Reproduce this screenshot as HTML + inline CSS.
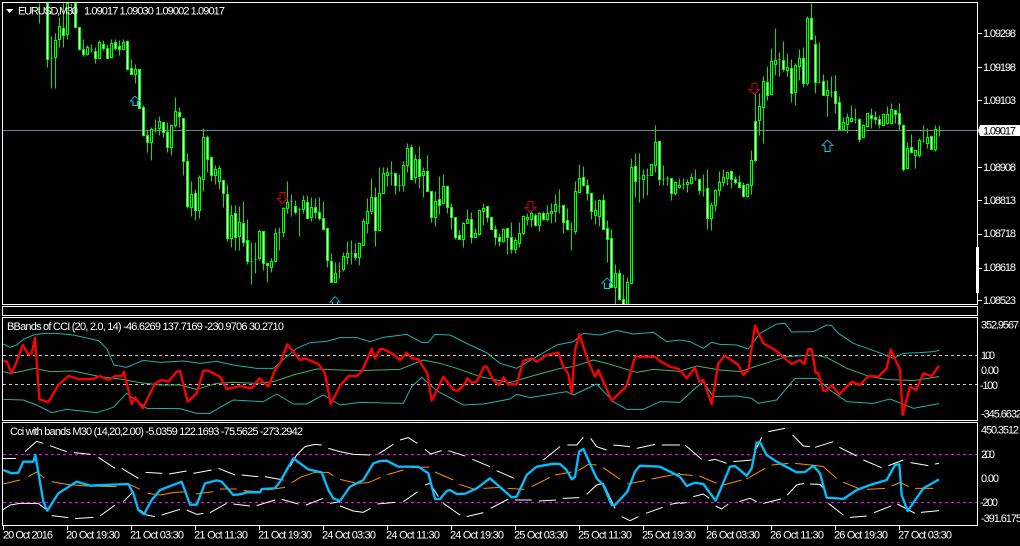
<!DOCTYPE html>
<html><head><meta charset="utf-8"><title>EURUSD,M30</title>
<style>
html,body{margin:0;padding:0;background:#000;width:1020px;height:546px;overflow:hidden}
svg{display:block}
text{font-family:"Liberation Sans",sans-serif;font-size:11px;fill:#fff}
</style></head><body>
<svg xmlns="http://www.w3.org/2000/svg" width="1020" height="546" viewBox="0 0 1020 546">
<defs>
<clipPath id="m"><rect x="3" y="3" width="974" height="301"/></clipPath>
</defs>
<rect width="1020" height="546" fill="#000"/>
<path d="M3 130.5H977" stroke="#708090" fill="none"/>
<g clip-path="url(#m)"><g transform="translate(.5 .5)" shape-rendering="crispEdges">
<path fill="none" stroke="#00e800" d="M39 3V23M47 3V67M51 36V88M55 33V88M59 17V47M63 3V47M67 3V39M71 3V6M75 3V28M79 27V50M83 39V56M87 45V55M91 44V52M95 47V63M99 40V58M103 40V50M107 44V58M111 39V58M115 39V50M119 40V55M123 39V49M127 40V70M131 59V74M135 64V83M139 69V109M143 105V136M147 130V152M151 127V160M155 119V132M159 116V135M163 122V137M167 122V152M171 125V155M175 97V127M179 107V127M183 118V175M187 153V208M191 181V216M195 189V220M199 175V218M203 128V191M207 135V172M211 156V181M215 165V184M219 165V189M223 179V207M227 184V241M231 205V247M235 205V250M239 206V250M243 201V246M247 219V264M251 242V284M255 242V273M259 229V260M263 231V270M267 262V282M271 258V272M275 228V262M279 227V250M283 207V237M287 181V213M291 194V216M295 200V214M299 207V236M303 195V213M307 195V218M311 197V221M315 198V218M319 197V220M323 201V230M327 227V267M331 253V282M335 262V282M339 262V278M343 252V271M347 241V264M351 240V264M355 243V260M359 242V265M363 218V245M367 198V233M371 178V214M375 187V246M379 167V230M383 167V193M387 167V186M391 161V185M395 172V194M399 174V191M403 161V191M407 143V172M411 144V179M415 154V183M419 146V188M423 167V197M427 155V191M431 191V222M435 191V226M439 176V214M443 174V204M447 185V213M451 203V229M455 217V239M459 230V239M463 222V247M467 209V223M471 212V243M475 228V237M479 209V235M483 203V225M487 206V222M491 216V229M495 225V245M499 233V246M503 228V242M507 228V254M511 222V253M515 237V253M519 222V247M523 215V235M527 213V225M531 211V227M535 213V226M539 212V231M543 211V220M547 205V221M551 203V223M555 194V222M559 189V213M563 205V233M567 208V230M571 222V250M575 181V234M579 164V192M583 166V186M587 179V200M591 192V219M595 200V224M599 199V226M603 194V229M607 220V262M611 229V287M615 264V304M619 269V300M623 274V304M627 277V304M631 158V283M635 153V197M639 153V202M643 169V198M647 168V195M651 164V175M655 125V172M659 141V185M663 165V185M667 176V185M671 178V200M675 181V195M679 178V188M683 178V189M687 179V192M691 173V184M695 169V180M699 178V194M703 174V196M707 169V229M711 202V230M715 189V211M719 171V196M723 169V186M727 171V185M731 170V188M735 176V184M739 175V188M743 182V197M747 183V197M751 150V194M755 93V162M759 93V135M763 76V143M767 66V100M771 48V94M775 28V75M779 52V76M783 41V71M787 53V76M791 59V102M795 63V105M799 49V80M803 47V87M807 16V85M811 3V39M815 35V93M819 42V83M823 74V95M827 80V116M831 76V97M835 75V113M839 96V130M843 117V130M847 113V133M851 105V122M855 108V123M859 118V142M863 124V137M867 113V127M871 108V128M875 111V124M879 115V128M883 113V125M887 106V124M891 103V123M895 110V123M899 103V130M903 124V171M907 142V169M911 134V153M915 150V168M919 138V157M923 125V142M927 128V148M931 135V149M935 125V151M939 125V136"/>
<path fill="#000" stroke="#00ff00" d="M54 40H56V57H54ZM58 26H60V39H58ZM66 3H68V34H66ZM86 47H88V54H86ZM98 42H100V58H98ZM110 43H112V57H110ZM122 42H124V49H122ZM134 69H136V74H134ZM150 129H152V142H150ZM158 121H160V128H158ZM170 125H172V147H170ZM174 111H176V125H174ZM190 194H192V207H190ZM198 177H200V210H198ZM202 137H204V179H202ZM214 169H216V175H214ZM218 168H220V181H218ZM230 215H232V238H230ZM238 222H240V236H238ZM258 231H260V258H258ZM270 261H272V267H270ZM274 233H276V261H274ZM282 208H284V232H282ZM286 202H288V208H286ZM302 200H304V209H302ZM310 207H312V217H310ZM334 273H336V282H334ZM342 256H344V269H342ZM346 253H348V257H346ZM358 243H360V257H358ZM362 221H364V245H362ZM366 211H368V223H366ZM370 197H372V211H370ZM378 193H380V230H378ZM382 173H384V193H382ZM386 172H388V175H386ZM402 165H404V185H402ZM406 148H408V165H406ZM414 159H416V177H414ZM422 171H424V175H422ZM434 201H436V217H434ZM442 186H444V203H442ZM462 223H464V239H462ZM466 219H468V223H466ZM474 233H476V237H474ZM478 210H480V234H478ZM482 208H484V211H482ZM502 229H504V241H502ZM514 240H516V249H514ZM518 233H520V243H518ZM522 216H524V233H522ZM526 217H528V219H526ZM530 213H532V219H530ZM538 213H540V225H538ZM546 213H548V219H546ZM550 211H552V213H550ZM554 204H556V211H554ZM574 191H576V231H574ZM578 178H580V192H578ZM594 210H596V215H594ZM598 200H600V216H598ZM614 273H616V287H614ZM626 282H628V304H626ZM630 167H632V283H630ZM642 175H644V179H642ZM650 164H652V175H650ZM654 142H656V165H654ZM674 182H676V193H674ZM678 185H680V187H678ZM686 182H688V184H686ZM690 177H692V183H690ZM710 205H712V218H710ZM714 190H716V205H714ZM718 182H720V190H718ZM722 177H724V182H722ZM726 172H728V178H726ZM746 184H748V196H746ZM750 160H752V185H750ZM758 106H760V120H758ZM762 81H764V107H762ZM770 61H772V94H770ZM774 60H776V64H774ZM786 67H788V70H786ZM794 65H796V92H794ZM798 58H800V66H798ZM806 18H808V83H806ZM826 90H828V95H826ZM842 122H844V129H842ZM846 117H848V124H846ZM850 118H852V121H850ZM862 125H864V137H862ZM866 113H868V126H866ZM882 114H884V125H882ZM886 114H888V123H886ZM890 109H892V123H890ZM906 148H908V168H906ZM914 150H916V155H914ZM918 140H920V155H918ZM926 137H928V143H926ZM934 129H936V149H934Z"/>
<path fill="#fff" stroke="#00ff00" d="M46 3H48V59H46ZM62 28H64V35H62ZM74 3H76V27H74ZM78 27H80V49H78ZM82 49H84V54H82ZM94 51H96V58H94ZM102 44H104V48H102ZM106 48H108V58H106ZM114 42H116V48H114ZM118 46H120V49H118ZM126 41H128V69H126ZM130 68H132V74H130ZM138 69H140V108H138ZM142 107H144V135H142ZM146 135H148V142H146ZM162 122H164V132H162ZM166 132H168V147H166ZM178 112H180V116H178ZM182 118H184V161H182ZM186 161H188V206H186ZM194 193H196V210H194ZM206 137H208V159H206ZM210 157H212V175H210ZM222 180H224V193H222ZM226 194H228V238H226ZM234 213H236V237H234ZM242 223H244V242H242ZM246 240H248V261H246ZM262 231H264V263H262ZM266 263H268V265H266ZM294 206H296V212H294ZM306 202H308V218H306ZM314 207H316V212H314ZM318 212H320V218H318ZM322 218H324V229H322ZM326 228H328V260H326ZM330 261H332V282H330ZM354 253H356V257H354ZM374 197H376V230H374ZM394 173H396V185H394ZM410 147H412V179H410ZM418 159H420V176H418ZM426 171H428V191H426ZM430 191H432V217H430ZM438 199H440V205H438ZM446 186H448V207H446ZM450 207H452V217H450ZM454 217H456V237H454ZM458 235H460V239H458ZM470 219H472V237H470ZM486 206H488V217H486ZM490 217H492V229H490ZM494 229H496V237H494ZM498 237H500V241H498ZM506 228H508V237H506ZM510 237H512V249H510ZM534 215H536V225H534ZM542 213H544V219H542ZM562 205H564V222H562ZM566 220H568V229H566ZM582 177H584V185H582ZM586 185H588V193H586ZM590 193H592V211H590ZM602 200H604V229H602ZM606 228H608V239H606ZM610 238H612V287H610ZM618 273H620V299H618ZM622 299H624V304H622ZM634 166H636V181H634ZM658 141H660V179H658ZM670 178H672V193H670ZM698 179H700V190H698ZM706 188H708V218H706ZM730 171H732V179H730ZM734 179H736V182H734ZM738 182H740V187H738ZM742 185H744V196H742ZM754 121H756V160H754ZM766 82H768V95H766ZM782 60H784V69H782ZM790 68H792V93H790ZM802 58H804V83H802ZM810 18H812V39H810ZM814 44H816V82H814ZM822 81H824V95H822ZM834 91H836V103H834ZM838 102H840V129H838ZM858 119H860V139H858ZM870 115H872V118H870ZM874 117H876V119H874ZM878 119H880V124H878ZM894 110H896V114H894ZM898 113H900V124H898ZM902 125H904V169H902ZM910 147H912V152H910ZM930 136H932V149H930Z"/>
<path fill="none" stroke="#00ff00" d="M50 58H52M90 49H92M154 128H156M250 261H252M254 259H256M278 232H280M290 201H292M298 209H300M338 271H340M350 253H352M390 173H392M398 185H400M558 206H560M570 229H572M638 178H640M646 175H648M662 179H664M666 178H668M682 184H684M694 178H696M702 190H704M778 59H780M818 82H820M830 92H832M854 119H856M922 141H924M938 130H940"/>
<path fill="none" stroke="#00a8c8" d="M134.5 95.5L130 100.5H132.5M137 100.5H139L134.5 95.5M334.5 296L329.5 301.5H332M337 301.5H339.5L334.5 296M606.5 277.5L601.5 282.5H604M609 282.5H611.5L606.5 277.5M827 139.5L821.5 145H824.5M829.5 145H832.5L827 139.5"/>
<path fill="none" stroke="#00d8f8" d="M132.5 100.5V105H137V100.5M332 301.5V306H337V301.5M604 282.5V288H609V282.5M824.5 145V151H829.5V145"/>
<path fill="none" stroke="#d00000" d="M279.5 192H284.5V198H287L282 203L277 198H279.5ZM527.5 201H532.5V207H535.5L530 212L524.5 207H527.5ZM751.5 83H756.5V89H759L754 94L748.5 89H751.5Z"/>
</g></g>
<g shape-rendering="crispEdges" fill="none">
<path stroke="#fff" d="M2.5 2.5H977.5V304.5H2.5ZM2.5 306.5H977.5V315.5H2.5ZM2.5 317.5H977.5V420.5H2.5ZM2.5 422.5H977.5V525.5H2.5Z"/>
<rect x="976" y="247" width="3" height="46" fill="#fff"/>
<path stroke="#c8c8c8" stroke-dasharray="3 3" d="M3 355.5H977M3 384.5H977"/>
<path stroke="#ff00ff" stroke-dasharray="3 3" d="M3 454.5H977M3 502.5H977"/>
<path stroke="#fff" d="M978 33.5H982M978 67.5H982M978 100.5H982M978 167.5H982M978 200.5H982M978 234.5H982M978 268.5H982M978 300.5H982M3.5 526V530M67.5 526V530M131.5 526V530M195.5 526V530M259.5 526V530M323.5 526V530M387.5 526V530M451.5 526V530M515.5 526V530M579.5 526V530M643.5 526V530M707.5 526V530M771.5 526V530M835.5 526V530M899.5 526V530"/>
</g>
<!-- Pane 2 -->
<g fill="none" stroke-linejoin="round">
<g transform="translate(0 300) scale(.33333)">
<path stroke="#20b2aa" stroke-width="3" d="M10 132L30 142 50 135 70 118 100 105 130 100 170 100 220 105 295 122 320 145 342 195 380 202 430 181 480 187 550 183 600 190 650 184 700 195 770 205 820 205 860 170 890 145 930 128 980 124 1020 113"/>
<path stroke="#3cb371" stroke-width="3" d="M10 215L30 220 60 215 105 205 150 215 220 213 300 230 360 237 420 248 480 255 540 255 590 268 650 250 700 247 770 250 820 245 880 225 950 207 1020 210"/>
<path stroke="#20b2aa" stroke-width="3" d="M10 298L70 300 110 315 155 338 200 328 290 338 340 322 380 280 440 325 540 326 590 340 630 340 660 322 700 300 790 305 830 282 880 312 920 312 970 285 1020 315"/>
<path stroke="#ff0000" stroke-width="7" d="M10 182L20 185 35 220 50 185 68 135 85 163 95 160 105 113 118 298 145 306 175 255 205 228 240 238 280 237 300 228 325 240 345 228 365 228 372 215 395 312 405 292 428 325 465 250 485 240 505 245 530 215 540 212 563 305 590 280 610 212 625 212 660 230 680 267 720 258 755 265 778 235 805 260 825 210 840 190 862 133 900 180 915 175 955 192 975 220 992 312 1020 258"/>
</g>
<g transform="translate(340 300) scale(.33333)">
<path stroke="#20b2aa" stroke-width="3" d="M0 113L50 113 90 125 130 112 200 103 245 127 265 127 285 103 330 105 390 135 440 158 480 190 530 205 590 170 650 135 700 125 730 100 780 105 830 91 880 102 940 97 980 125 1020 120"/>
<path stroke="#3cb371" stroke-width="3" d="M0 210L60 212 180 208 250 180 300 190 350 205 420 230 510 248 570 230 660 205 700 200 760 180 800 190 890 217 940 208 1020 214"/>
<path stroke="#20b2aa" stroke-width="3" d="M0 315L60 307 190 310 215 260 245 232 290 272 370 315 430 312 510 297 530 283 570 293 680 275 700 285 770 252 820 305 860 328 910 328 960 305 1020 307"/>
<path stroke="#ff0000" stroke-width="7" d="M0 258L25 228 50 228 65 215 95 147 105 175 120 147 130 147 160 163 180 180 200 158 215 175 235 178 262 220 275 302 310 230 340 270 355 272 375 250 382 235 395 248 410 245 432 200 440 200 460 240 478 255 490 232 505 253 530 253 550 182 575 175 590 185 620 165 655 158 670 200 685 222 695 280 705 150 718 103 745 185 765 230 775 210 815 302 860 258 885 170 945 170 960 183 990 200 1020 208"/>
</g>
<g transform="translate(680 300) scale(.33333)">
<path stroke="#20b2aa" stroke-width="3" d="M0 120L30 125 70 145 95 127 120 133 170 135 205 147 240 100 290 72 315 70 335 96 400 95 440 75 455 77 475 100 520 130 590 155 640 175 670 160 720 158 760 155 777 151"/>
<path stroke="#3cb371" stroke-width="3" d="M0 213L50 198 120 210 180 215 240 195 320 170 400 165 440 172 500 205 570 230 620 238 700 242 777 230"/>
<path stroke="#20b2aa" stroke-width="3" d="M0 307L40 270 70 245 100 290 170 288 215 295 235 310 290 300 345 235 410 235 450 270 500 305 580 310 630 297 700 325 777 311"/>
<path stroke="#ff0000" stroke-width="7" d="M0 210L20 235 45 203 58 245 70 240 95 312 115 190 135 167 175 195 190 225 205 210 225 77 250 130 285 150 335 192 360 180 372 192 385 147 395 147 407 218 415 220 430 272 440 272 455 255 478 283 515 245 540 255 565 228 595 230 620 205 632 148 660 210 668 345 690 260 708 270 730 220 755 228 777 197"/>
</g>
<!-- Pane 3 -->
<g transform="translate(0 300) scale(.33333)">
<path stroke="#ff8c00" stroke-width="3" d="M10 552L60 540M85 530L110 516 133 534M155 545L200 553 260 558 350 560M385 552L420 568M443 580L480 585 520 578 560 575M587 582L640 575M660 567L710 567M730 572L780 575M800 570L855 562M875 548L905 530 945 517 985 517 1000 527"/>
<path stroke="#fff" stroke-width="3" d="M8 476L48 475M75 455L110 424 130 430M150 437L200 455M222 458L272 463M295 472L345 505M365 505L415 535M437 517L487 520M507 522L560 513M580 520L635 510M655 505L705 525M725 525L775 530M795 530L850 540M870 500L890 465 915 440 945 433 965 435M985 445L1020 455"/>
<path stroke="#fff" stroke-width="3" d="M8 630L30 615 60 610 115 610 140 630M155 647L205 653M225 656L280 652M300 648L345 615M370 605L400 575M420 630L440 645 465 650M485 645L540 628M560 630L590 643 610 640M630 638L680 610M700 612L750 618M770 617L825 600M845 598L895 612M918 615L970 595M990 610L1020 605"/>
<path stroke="#00bfff" stroke-width="7" d="M10 510L35 520 55 518 70 485 100 485 106 465 130 605 142 632 175 580 230 545 270 557 310 555 385 552 400 580 415 630 432 643 455 600 480 570 545 545 570 614 590 614 615 550 650 541 665 545 700 585 720 583 740 577 780 577 785 567 825 565 840 545 880 475 900 490 925 508 965 517 985 570 1000 595 1020 603"/>
</g>
<g transform="translate(340 300) scale(.33333)">
<path stroke="#ff8c00" stroke-width="3" d="M0 538L50 550 85 548 122 532M142 524L190 510M215 503L268 501M285 516L340 540M358 553L410 570M430 565L480 562M503 565L553 568M575 560L630 532M645 525L695 516M715 512L745 493 770 495M790 503L840 538M862 552L915 542M935 537L1020 520"/>
<path stroke="#fff" stroke-width="3" d="M0 455L40 463 90 465M115 462L160 433M180 420L205 413 232 430M255 448L272 462 305 452M325 452L375 468M397 478L450 500M470 512L522 535M610 480L660 440M682 435L710 435 730 412M752 415L770 440 800 450M820 435L870 440M890 445L945 433M965 435L1020 435"/>
<path stroke="#fff" stroke-width="3" d="M0 618L40 633 70 637 92 625M112 612L165 607M190 605L233 575M255 555L270 550 295 590M310 610L360 645M380 650L430 638M452 625L505 597M525 600L575 600M597 603L648 600M668 595L718 593M740 583L770 555 790 550 825 625M845 650L870 662 895 650M918 640L968 622M990 613L1020 608"/>
<path stroke="#00bfff" stroke-width="7" d="M0 603L30 560 70 540 100 490 120 483 140 482 175 500 235 500 265 520 285 597 300 597 320 573 330 570 350 582 375 581 410 565 450 535 490 570 515 592 530 590 560 525 590 500 640 491 660 492 680 510 695 538 705 530 717 455 730 447 770 535 790 555 815 615 825 615 862 575 885 515 900 497 960 500 1000 520 1020 530"/>
</g>
<g transform="translate(680 300) scale(.33333)">
<path stroke="#ff8c00" stroke-width="3" d="M0 523L38 526M58 528L110 550M130 555L185 540M200 537L255 505M275 495L325 490M345 490L410 497 430 500 470 535M490 547L540 567M560 568L615 565M635 558L660 547 687 560M705 565L760 565"/>
<path stroke="#fff" stroke-width="3" d="M15 435L65 478M85 482L105 478 140 490M160 485L215 480M225 455L245 412M265 395L315 385M338 405L370 438 390 440M405 442L460 425M478 442L530 468M550 480L605 503M625 497L670 480M692 488L745 497M765 492L777 490"/>
<path stroke="#fff" stroke-width="3" d="M0 610L20 608M40 590L70 582 88 595M107 618L125 627 145 612M178 605L210 595 230 605M250 610L303 597M322 585L350 555 372 550M390 552L420 553 435 570M445 610L490 645M510 652L560 648M582 638L633 618M652 612L705 640M723 637L777 632"/>
<path stroke="#00bfff" stroke-width="7" d="M0 530L20 558 45 548 70 552 107 602 150 500 165 498 200 527 215 505 230 428 240 427 260 465 290 485 350 517 375 516 400 497 420 520 440 593 470 595 490 597 530 570 570 555 620 540 645 495 658 493 665 585 683 633 730 565 777 538"/>
</g>
</g>
<!-- Header -->
<path d="M6 9H13.5L9.75 13Z" fill="#fff"/>
<text x="18" y="14.5" textLength="60" lengthAdjust="spacing">EURUSD,M30</text>
<text x="84" y="14.5" textLength="141" lengthAdjust="spacing">1.09017 1.09030 1.09002 1.09017</text>
<text x="7" y="330" textLength="277" lengthAdjust="spacing">BBands of CCI (20, 2.0, 14) -46.6269 137.7169 -230.9706 30.2710</text>
<text x="10" y="435" textLength="293" lengthAdjust="spacing">Cci with bands M30 (14,20,2.00) -5.0359 122.1693 -75.5625 -273.2942</text>
<!-- Price axis -->
<g>
<text x="983" y="37" textLength="33" lengthAdjust="spacing">1.09298</text>
<text x="983" y="71" textLength="33" lengthAdjust="spacing">1.09198</text>
<text x="983" y="104" textLength="33" lengthAdjust="spacing">1.09103</text>
<text x="983" y="171" textLength="33" lengthAdjust="spacing">1.08908</text>
<text x="983" y="204" textLength="33" lengthAdjust="spacing">1.08813</text>
<text x="983" y="237" textLength="33" lengthAdjust="spacing">1.08718</text>
<text x="983" y="271" textLength="33" lengthAdjust="spacing">1.08618</text>
<text x="983" y="304" textLength="33" lengthAdjust="spacing">1.08523</text>
<path d="M978 130.5L980 125H1020V136H980Z" fill="#fff"/>
<text x="983" y="134.5" textLength="33" lengthAdjust="spacing" style="fill:#000">1.09017</text>
<text x="981" y="328.5" textLength="38" lengthAdjust="spacing">352.9567</text>
<text x="981" y="359" textLength="14" lengthAdjust="spacing">100</text>
<text x="981" y="374" textLength="18" lengthAdjust="spacing">0.00</text>
<text x="980" y="389" textLength="18" lengthAdjust="spacing">-100</text>
<text x="981" y="417.5" textLength="41" lengthAdjust="spacing">-345.6632</text>
<text x="981" y="433.5" textLength="38" lengthAdjust="spacing">450.3512</text>
<text x="981" y="458" textLength="14" lengthAdjust="spacing">200</text>
<text x="981" y="482" textLength="18" lengthAdjust="spacing">0.00</text>
<text x="980" y="506" textLength="18" lengthAdjust="spacing">-200</text>
<text x="981" y="522" textLength="41" lengthAdjust="spacing">-391.6175</text>
</g>
<!-- Time axis -->
<g>
<text x="3" y="538.5" textLength="50" lengthAdjust="spacing">20 Oct 2016</text>
<text x="66" y="538.5" textLength="54" lengthAdjust="spacing">20 Oct 19:30</text>
<text x="130" y="538.5" textLength="54" lengthAdjust="spacing">21 Oct 03:30</text>
<text x="194" y="538.5" textLength="54" lengthAdjust="spacing">21 Oct 11:30</text>
<text x="258" y="538.5" textLength="54" lengthAdjust="spacing">21 Oct 19:30</text>
<text x="322" y="538.5" textLength="54" lengthAdjust="spacing">24 Oct 03:30</text>
<text x="386" y="538.5" textLength="54" lengthAdjust="spacing">24 Oct 11:30</text>
<text x="450" y="538.5" textLength="54" lengthAdjust="spacing">24 Oct 19:30</text>
<text x="514" y="538.5" textLength="54" lengthAdjust="spacing">25 Oct 03:30</text>
<text x="578" y="538.5" textLength="54" lengthAdjust="spacing">25 Oct 11:30</text>
<text x="642" y="538.5" textLength="54" lengthAdjust="spacing">25 Oct 19:30</text>
<text x="706" y="538.5" textLength="54" lengthAdjust="spacing">26 Oct 03:30</text>
<text x="770" y="538.5" textLength="54" lengthAdjust="spacing">26 Oct 11:30</text>
<text x="834" y="538.5" textLength="54" lengthAdjust="spacing">26 Oct 19:30</text>
<text x="898" y="538.5" textLength="54" lengthAdjust="spacing">27 Oct 03:30</text>
</g>
</svg>
</body></html>
